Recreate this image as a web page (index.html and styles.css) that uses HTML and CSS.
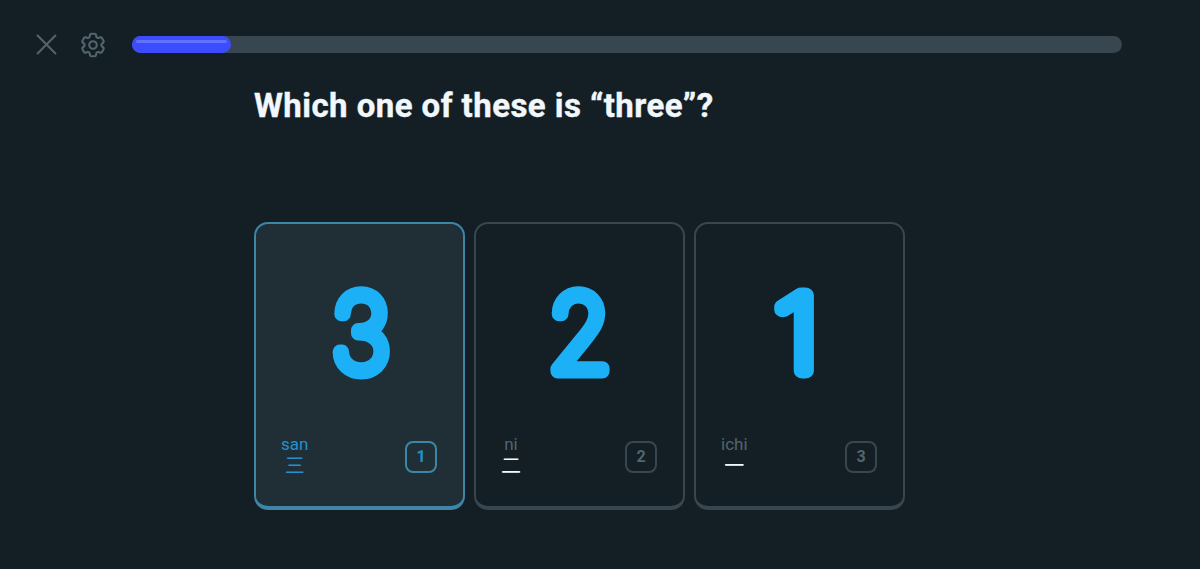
FILE: index.html
```html
<!DOCTYPE html>
<html lang="en">
<head>
  <meta charset="UTF-8">
  <title>Lesson</title>
  <link rel="stylesheet" href="styles.css">
</head>
<body>

  <header class="top-bar">
    <button class="icon-button" aria-label="Close">
      <svg class="icon-close" viewBox="0 0 20 20"><path d="M1.5 1.5l17 17M18.5 1.5l-17 17"/></svg>
    </button>
    <button class="icon-button" aria-label="Settings">
      <svg class="icon-gear" viewBox="0 0 24 24">
        <path d="M9.594 3.94c.09-.542.56-.94 1.11-.94h2.593c.55 0 1.02.398 1.11.94l.213 1.281c.063.374.313.686.645.87.074.04.147.083.22.127.325.196.72.257 1.075.124l1.217-.456a1.125 1.125 0 0 1 1.37.49l1.296 2.247a1.125 1.125 0 0 1-.26 1.431l-1.003.827c-.293.241-.438.613-.43.992a7.723 7.723 0 0 1 0 .255c-.008.378.137.75.43.991l1.004.827c.424.35.534.955.26 1.43l-1.298 2.247a1.125 1.125 0 0 1-1.369.491l-1.217-.456c-.355-.133-.75-.072-1.076.124a6.47 6.47 0 0 1-.22.128c-.331.183-.581.495-.644.869l-.213 1.281c-.09.543-.56.94-1.11.94h-2.594c-.55 0-1.019-.398-1.11-.94l-.213-1.281c-.062-.374-.312-.686-.644-.87a6.52 6.52 0 0 1-.22-.127c-.325-.196-.72-.257-1.076-.124l-1.217.456a1.125 1.125 0 0 1-1.369-.49l-1.297-2.247a1.125 1.125 0 0 1 .26-1.431l1.004-.827c.292-.24.437-.613.43-.991a6.932 6.932 0 0 1 0-.255c.007-.38-.138-.751-.43-.992l-1.004-.827a1.125 1.125 0 0 1-.26-1.43l1.297-2.247a1.125 1.125 0 0 1 1.37-.491l1.216.456c.356.133.751.072 1.076-.124.072-.044.146-.086.22-.128.332-.183.582-.495.644-.869l.214-1.28Z"/>
        <circle cx="12" cy="12" r="3"/>
      </svg>
    </button>
    <div class="progress">
      <div class="progress-fill" style="width: 10%"><span class="progress-shine"></span></div>
    </div>
  </header>

  <main class="challenge">
    <h1>Which one of these is “three”?</h1>

    <div class="choices">
      <div class="card selected">
        <svg class="numeral" viewBox="0 0 140 140"><text transform="translate(72 109) scale(.95 1)">3</text></svg>
        <div class="card-footer">
          <div class="word"><span class="reading">san</span><span class="kanji" lang="ja">三</span></div>
          <span class="key">1</span>
        </div>
      </div>
      <div class="card">
        <svg class="numeral" viewBox="0 0 140 140"><text transform="translate(71 108.5) scale(.97 1)">2</text></svg>
        <div class="card-footer">
          <div class="word"><span class="reading">ni</span><span class="kanji" lang="ja">二</span></div>
          <span class="key">2</span>
        </div>
      </div>
      <div class="card">
        <svg class="numeral" viewBox="0 0 140 140"><text transform="translate(67.5 109) scale(1.16 1)">1</text></svg>
        <div class="card-footer">
          <div class="word"><span class="reading">ichi</span><span class="kanji" lang="ja">一</span></div>
          <span class="key">3</span>
        </div>
      </div>
    </div>
  </main>

</body>
</html>
```
FILE: styles.css
```css
:root {
  --background: #141f25;
  --line: #37464f;
  --muted: #52656d;
  --text: #f1f7fb;
  --blue: #1cb0f6;
  --selected: #202f36;
  --selectedLine: #3f85a7;
  --selectedText: #2491cf;
  --progress: #3c4dff;
}

* {
  box-sizing: border-box;
}
body {
  margin: 0;
  min-height: 569px;
  background: var(--background);
  color: var(--text);
  font-family: Roboto, "Noto Sans CJK JP", sans-serif;
}

/* Top bar */
.top-bar {
  display: flex;
  align-items: center;
  height: 89px;
  padding: 0 78px 0 36px;
}
.icon-button {
  display: flex;
  padding: 0;
  border: none;
  background: none;
  cursor: pointer;
}
.icon-button svg {
  fill: none;
  stroke: var(--muted);
  stroke-linecap: round;
  stroke-linejoin: round;
}
.icon-close {
  width: 21px;
  height: 21px;
  stroke-width: 1.9;
}
.icon-gear {
  width: 30px;
  height: 30px;
  margin: 0 24px 0 21px;
  stroke-width: 1.7;
}
.progress {
  flex: 1;
  height: 17px;
  border-radius: 9px;
  background: var(--line);
}
.progress-fill {
  height: 100%;
  padding: 4px 4px 0;
  border-radius: 9px;
  background: var(--progress);
}
.progress-shine {
  display: block;
  height: 3px;
  border-radius: 2px;
  background: #6371ff;
}

/* Question */
.challenge {
  width: 652px;
  margin-left: 254px;
}
h1 {
  margin: -2px 0 97px;
  font-size: 33px;
  font-weight: 700;
  line-height: 38px;
  letter-spacing: 0.45px;
  white-space: nowrap;
  -webkit-text-stroke: 0.4px var(--text);
}

/* Cards */
.choices {
  display: grid;
  grid-template-columns: repeat(3, 211px);
  gap: 9px;
}
.card {
  display: flex;
  flex-direction: column;
  height: 288px;
  padding: 38px 26px 0 25px;
  border: 2px solid var(--line);
  border-bottom-width: 4px;
  border-radius: 14px;
}
.numeral {
  align-self: center;
  width: 140px;
  height: 140px;
}
.numeral text {
  font-family: Inter, sans-serif;
  font-size: 105px;
  font-weight: 100;
  text-anchor: middle;
  fill: var(--blue);
  stroke: var(--blue);
  stroke-width: 15px;
  stroke-linejoin: round;
}
.card-footer {
  display: flex;
  justify-content: space-between;
  margin-top: 32px;
}
.word {
  display: flex;
  flex-direction: column;
  align-items: center;
}
.reading {
  color: var(--muted);
  font-size: 17px;
  line-height: 20px;
}
.kanji {
  font-family: "Noto Sans CJK JP", sans-serif;
  font-size: 20px;
  line-height: 22px;
}
.key {
  display: flex;
  justify-content: center;
  width: 32px;
  height: 32px;
  margin-top: 7px;
  border: 2px solid var(--line);
  border-radius: 8px;
  color: var(--muted);
  font-size: 16px;
  font-weight: 700;
  line-height: 27px;
}

.card.selected {
  background: var(--selected);
  border-color: var(--selectedLine);
}
.selected .reading,
.selected .kanji,
.selected .key {
  color: var(--selectedText);
}
.selected .key {
  border-color: var(--selectedLine);
}
```
